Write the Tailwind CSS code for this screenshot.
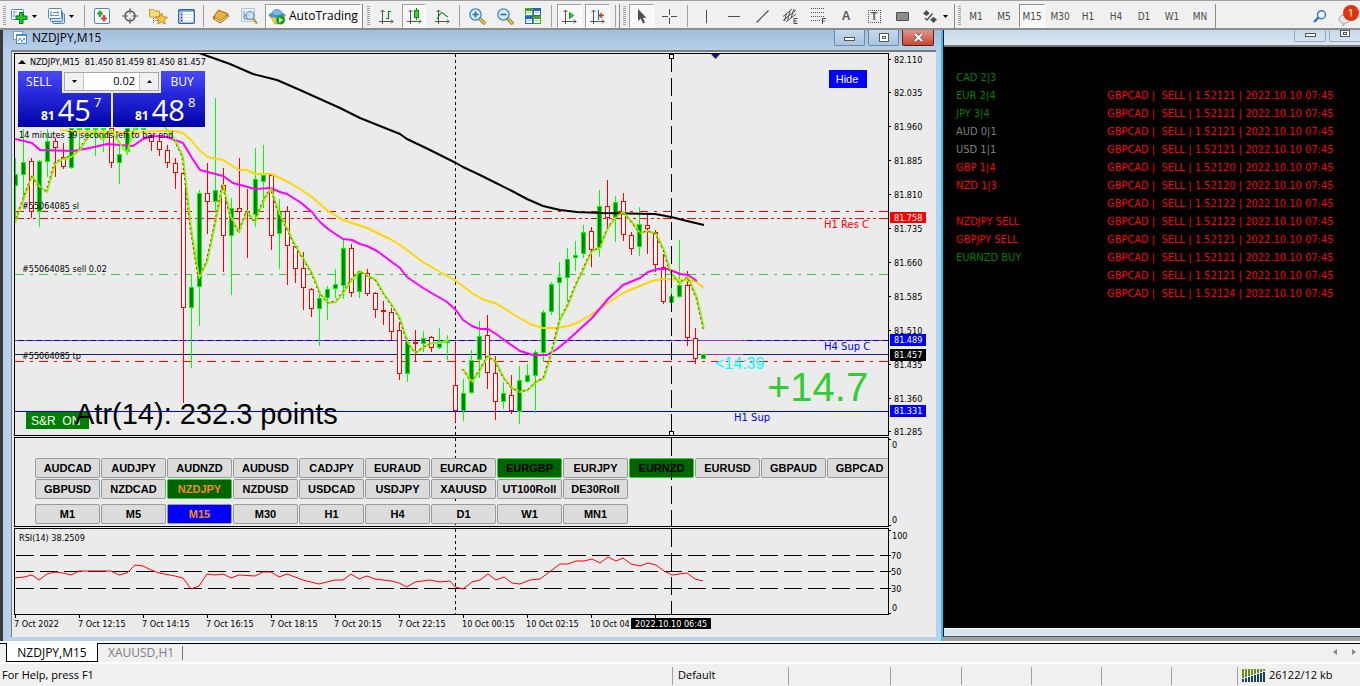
<!DOCTYPE html>
<html lang="en">
<head>
<meta charset="utf-8">
<title>NZDJPY,M15</title>
<script src="https://cdn.jsdelivr.net/npm/@tailwindcss/browser@4"></script>
</head>
<body class="flex h-screen flex-col overflow-hidden bg-[#f0f0f0] font-['Open_Sans',sans-serif] text-black">

<!-- Toolbar -->
<header class="flex h-[30px] shrink-0 items-center overflow-hidden border-t border-b-2 border-t-[#a0a0a0] border-b-[#8c8c8c] bg-[#f0f0f0] pt-[3px] text-[#4a4a4a]">
  <span class="ml-[3px] mr-[4px] h-5 w-[3px] shrink-0 bg-[repeating-linear-gradient(#a0a0a0_0_1px,#f0f0f0_1px_2px)]"></span>
  <button aria-label="New chart" class="flex h-6 w-[37px] shrink-0 items-center gap-1 pl-[1px]">
    <svg width="17" height="16" viewBox="0 0 17 16"><rect x=".5" y="1.500" width="12" height="10" rx="1" fill="#fff" stroke="#4a86c5"/><path d="M2 4h4M3 3v6M2 8h7" stroke="#7ba7d6" fill="none"/><path d="M8.500 4.500h3.500v3.500h4v3.500h-4V15.500H8.500v-4H5V8h3.500z" fill="#22c428" stroke="#0a7a12"/></svg>
    <svg width="5" height="3"><path d="M0 0h5L2.500 3z"/></svg>
  </button>
  <button aria-label="Profiles" class="flex h-6 w-[37px] shrink-0 items-center gap-1 pl-[1px]">
    <svg width="17" height="16" viewBox="0 0 17 16"><rect x="4.500" y="5.500" width="12" height="10" rx="1" fill="#cfe0f3" stroke="#4a86c5"/><rect x="2.500" y="3.500" width="12" height="10" rx="1" fill="#cfe0f3" stroke="#4a86c5"/><rect x=".5" y=".5" width="13" height="10" rx="1" fill="#fff" stroke="#4a86c5"/><path d="M3 2.500v6M2 7.500h9M5 4.500h6l-1.500-1M11 4.500l-1.500 1" stroke="#5d92cb" fill="none"/></svg>
    <svg width="5" height="3"><path d="M0 0h5L2.500 3z"/></svg>
  </button>
  <span class="mr-[3px] h-[22px] w-px shrink-0 bg-[#a0a0a0]"></span>
  <button aria-label="Market watch" class="flex h-6 w-7 shrink-0 items-center justify-center"><svg width="16" height="16" viewBox="0 0 16 16"><rect x=".5" y=".5" width="15" height="15" rx="1.500" fill="#fff" stroke="#4a86c5"/><path d="M2.500 4h11M2.500 7h11M2.500 10h11M2.500 13h11" stroke="#d8e6f5"/><path d="M5 8.500V6H3l3-3.500L9 6H7v2.500z" fill="#28b428" stroke="#128012" stroke-width=".6"/><path d="M9 7.500V10H7l3 3.500L13 10h-2V7.500z" fill="#f04a28" stroke="#b8260c" stroke-width=".6"/></svg></button>
  <button aria-label="Data window" class="flex h-6 w-7 shrink-0 items-center justify-center"><svg width="16" height="16" viewBox="0 0 16 16" fill="none" stroke="#555"><circle cx="8" cy="8" r="5" stroke-width="1.500"/><path d="M8 0v6M8 10v6M0 8h6M10 8h6"/></svg></button>
  <button aria-label="Navigator" class="flex h-6 w-7 shrink-0 items-center justify-center"><svg width="19" height="17" viewBox="0 0 19 17"><path d="M.5 1.500h4l1 1.500h5v6H.5z" fill="#f9dd7c" stroke="#c09b2a"/><path d="M4.500 10v6M6 12.500h4" stroke="#555" stroke-dasharray="1 1"/><path d="M12.500 5l1.800 3.800 4.100.5-3 2.800.8 4-3.700-2-3.700 2 .8-4-3-2.800 4.100-.5z" fill="#fbc33d" stroke="#b9771a" stroke-width=".8"/></svg></button>
  <button aria-label="Terminal" class="flex h-6 w-7 shrink-0 items-center justify-center"><svg width="17" height="15" viewBox="0 0 17 15"><rect x=".7" y=".7" width="15.600" height="13.600" rx="1" fill="#fff" stroke="#2f6db3" stroke-width="1.400"/><path d="M1 2h15" stroke="#2f6db3"/><rect x="2" y="3" width="3" height="11" fill="#a9c9ec"/><path d="M6 5.500h8M6 8.500h8M6 11.500h8" stroke="#d3e0ee"/><path d="M3 5.500h1M3 8.500h1M3 11.500h1" stroke="#111"/></svg></button>
  <span class="mx-[3px] h-[22px] w-px shrink-0 bg-[#a0a0a0]"></span>
  <button aria-label="Strategy tester" class="flex h-6 w-7 shrink-0 items-center justify-center"><svg width="18" height="15" viewBox="0 0 18 15"><path d="M1.500 8L6.500 1l9.500 4-7 7z" fill="#e9b13c" stroke="#9a6408"/><path d="M1.500 8l7 4 7.500-6.500.5 2-8 6.500-7-4z" fill="#c98e22" stroke="#8a5606" stroke-width=".7"/><path d="M3 9.500l5.500 3 7-5.500" fill="none" stroke="#fff0c0"/></svg></button>
  <button aria-label="MetaEditor" class="flex h-6 w-7 shrink-0 items-center justify-center"><svg width="17" height="17" viewBox="0 0 17 17"><rect x=".5" y=".5" width="13" height="13" fill="#e9f1fa" stroke="#b6c6d8"/><path d="M3 3v8h8M3 9l2-3 2 2 3-4" fill="none" stroke="#789"/><circle cx="9" cy="7.500" r="4" fill="#c6e2f7" fill-opacity=".8" stroke="#5b91c2" stroke-width="1.200"/><path d="M12 10.500l4 5" stroke="#c9952c" stroke-width="2.200"/></svg></button>
  <button class="ml-[2px] flex h-[25px] w-[96px] shrink-0 items-center gap-[3px] border border-[#fff] border-l-[#9a9a9a] border-t-[#9a9a9a] bg-[#f9f9f9] pl-[2px] text-xs text-black">
    <svg width="18" height="17" viewBox="0 0 18 17" class="shrink-0"><path d="M2 8l5 8 8-1 2-8z" fill="#f6cf46" stroke="#b98a1c" stroke-width=".7"/><ellipse cx="9" cy="7" rx="8.500" ry="3" fill="#4c97cf"/><path d="M4 6c0-6 10-6 10 0-2 2-8 2-10 0z" fill="#7dbbe6" stroke="#2d79b5" stroke-width=".6"/><circle cx="12.500" cy="12" r="4.500" fill="#15a51f"/><path d="M11 9.500v5l4-2.500z" fill="#fff"/></svg>
    <span>AutoTrading</span>
  </button>
  <span class="ml-[1px] mr-[4px] h-6 w-px shrink-0 bg-[#8c8c8c]"></span>
  <span class="mr-[2px] h-5 w-[3px] shrink-0 bg-[repeating-linear-gradient(#a0a0a0_0_1px,#f0f0f0_1px_2px)]"></span>
  <button aria-label="Bar chart" class="flex h-6 w-7 shrink-0 items-center justify-center"><svg width="15" height="15" viewBox="0 0 15 15" fill="none"><path d="M3.500 1v14M0 12.500h14M1.500 3l2-2 2 2M12 10.500l2 2-2 2" stroke="#555"/><path d="M9.500 2v8M7 9.500h2.500M9.500 2.500H12" stroke="#0a8a12" stroke-width="1.200"/></svg></button>
  <button aria-label="Candlesticks" class="mx-[2px] flex h-6 w-6 shrink-0 items-center justify-center border border-[#fff] border-l-[#a0a0a0] border-t-[#a0a0a0] bg-[#f8f8f8]"><svg width="15" height="16" viewBox="0 0 15 16" fill="none"><path d="M3.500 2v14M0 13.500h14M1.500 4l2-2 2 2M12 11.500l2 2-2 2" stroke="#555"/><path d="M9.500 0v12" stroke="#0a8a12"/><rect x="7.500" y="2.500" width="4" height="7" fill="#35d43c" stroke="#0a8a12"/></svg></button>
  <button aria-label="Line chart" class="flex h-6 w-7 shrink-0 items-center justify-center"><svg width="15" height="15" viewBox="0 0 15 15" fill="none"><path d="M3.500 1v14M0 12.500h14M1.500 3l2-2 2 2M12 10.500l2 2-2 2" stroke="#555"/><path d="M2 10l3-5c2-2 4-1 5 1l3 2" stroke="#1b9a23" stroke-width="1.200"/></svg></button>
  <span class="mx-[3px] h-[22px] w-px shrink-0 bg-[#a0a0a0]"></span>
  <button aria-label="Zoom in" class="flex h-6 w-7 shrink-0 items-center justify-center"><svg width="17" height="17" viewBox="0 0 17 17"><path d="M10 10l6 6" stroke="#a87a17" stroke-width="3.400"/><path d="M10.500 10.500l5 5" stroke="#f7d368" stroke-width="1.400"/><circle cx="6.500" cy="6.500" r="5.600" fill="#d5ecfc" stroke="#3d82bd" stroke-width="1.300"/><path d="M3.500 6.500h6M6.500 3.500v6" stroke="#1f6db4" stroke-width="1.600"/></svg></button>
  <button aria-label="Zoom out" class="flex h-6 w-7 shrink-0 items-center justify-center"><svg width="17" height="17" viewBox="0 0 17 17"><path d="M10 10l6 6" stroke="#a87a17" stroke-width="3.400"/><path d="M10.500 10.500l5 5" stroke="#f7d368" stroke-width="1.400"/><circle cx="6.500" cy="6.500" r="5.600" fill="#d5ecfc" stroke="#3d82bd" stroke-width="1.300"/><path d="M3.500 6.500h6" stroke="#1f6db4" stroke-width="1.600"/></svg></button>
  <button aria-label="Tile windows" class="flex h-6 w-7 shrink-0 items-center justify-center"><svg width="16" height="16" viewBox="0 0 16 16"><path d="M0 0h8v8H0zM8 8h8v8H8z" fill="#4aa31c"/><path d="M8 0h8v8H8zM0 8h8v8H0z" fill="#2a62c8"/><path d="M1 3h6v4H1zM9 3h6v4H9zM1 11h6v4H1zM9 11h6v4H9z" fill="#f2f7fc"/><path d="M2 4.500h4M10 4.500h4M2 12.500h4M10 12.500h4" stroke="#a9c1da"/></svg></button>
  <span class="mx-[4px] h-[22px] w-px shrink-0 bg-[#a0a0a0]"></span>
  <button aria-label="Auto scroll" class="ml-[1px] mr-[3px] flex h-6 w-[25px] shrink-0 items-center justify-center border border-[#fff] border-l-[#a0a0a0] border-t-[#a0a0a0] bg-[#f8f8f8]"><svg width="15" height="15" viewBox="0 0 15 15" fill="none"><path d="M3.500 1v14M0 12.500h14M1.500 3l2-2 2 2M12 10.500l2 2-2 2" stroke="#555"/><path d="M7.500 3.500v6l4-3z" fill="#35d43c" stroke="#0a8a12"/></svg></button>
  <button aria-label="Chart shift" class="mr-[5px] flex h-6 w-[25px] shrink-0 items-center justify-center border border-[#fff] border-l-[#a0a0a0] border-t-[#a0a0a0] bg-[#f8f8f8]"><svg width="15" height="15" viewBox="0 0 15 15" fill="none"><path d="M3.500 1v14M0 12.500h14M1.500 3l2-2 2 2M12 10.500l2 2-2 2" stroke="#555"/><path d="M8.500 1v10" stroke="#2268b0" stroke-width="1.200"/><path d="M14 6.500H10M12 4l-2.500 2.500L12 9" stroke="#b8400c" stroke-width="1.300"/></svg></button>
  <span class="h-[22px] w-px shrink-0 bg-[#a0a0a0]"></span>
  <span class="ml-[3px] mr-[3px] h-6 w-px shrink-0 bg-[#8c8c8c]"></span>
  <span class="mr-[3px] h-5 w-[3px] shrink-0 bg-[repeating-linear-gradient(#a0a0a0_0_1px,#f0f0f0_1px_2px)]"></span>
  <button aria-label="Cursor" class="mr-[1px] flex h-6 w-[25px] shrink-0 items-center justify-center border border-[#fff] border-l-[#a0a0a0] border-t-[#a0a0a0] bg-[#f8f8f8]"><svg width="10" height="15" viewBox="0 0 10 15"><path d="M1 0v12l2.800-2.500L6 14.500l2-1L6 8.800h3.500z" fill="#4d4d4d"/></svg></button>
  <button aria-label="Crosshair" class="flex h-6 w-7 shrink-0 items-center justify-center"><svg width="15" height="15" stroke="#4d4d4d"><path d="M7.500 0v6M7.500 9v6M0 7.500h6M9 7.500h6"/></svg></button>
  <span class="mx-[4px] h-[22px] w-px shrink-0 bg-[#a0a0a0]"></span>
  <button aria-label="Vertical line" class="flex h-6 w-7 shrink-0 items-center justify-center"><svg width="15" height="14" stroke="#4d4d4d"><path d="M7.500 1v13"/></svg></button>
  <button aria-label="Horizontal line" class="flex h-6 w-7 shrink-0 items-center justify-center"><svg width="13" height="13" stroke="#4d4d4d"><path d="M0 6.500h12"/></svg></button>
  <button aria-label="Trendline" class="flex h-6 w-7 shrink-0 items-center justify-center"><svg width="13" height="13" stroke="#4d4d4d"><path d="M.5 12.500l12-12" stroke-width="1.200"/></svg></button>
  <button aria-label="Equidistant channel" class="flex h-6 w-7 shrink-0 items-center justify-center"><svg width="17" height="17" viewBox="0 0 17 17" stroke="#4d4d4d" fill="none"><path d="M1 8.500L10 1M1 12.500L14 2M4 14l10-8M4.500 5l-2 8M8 3L5.500 12M12 1L9 10"/><path d="M15.500 10.500h-3.500v5h3.500M12 13h3"/></svg></button>
  <button aria-label="Fibonacci" class="flex h-6 w-7 shrink-0 items-center justify-center"><svg width="15" height="16" viewBox="0 0 15 16" stroke="#4d4d4d" fill="none"><path d="M0 .5h14M0 4.500h14M0 8.500h14M0 12.500h9" stroke-dasharray="1 1"/><path d="M11.500 16v-5.500H15M11.500 13H14"/></svg></button>
  <button aria-label="Text" class="flex h-6 w-7 shrink-0 items-center justify-center font-['Liberation_Sans',sans-serif] text-xs font-bold text-[#5a5a5a]">A</button>
  <button aria-label="Text label" class="flex h-6 w-7 shrink-0 items-center justify-center"><span class="flex h-[13px] w-[13px] items-center justify-center border border-dotted border-[#4d4d4d] font-['Liberation_Sans',sans-serif] text-[11px] font-bold text-[#5a5a5a]">T</span></button>
  <button aria-label="Rectangle" class="flex h-6 w-7 shrink-0 items-center justify-center"><span class="h-[9px] w-[13px] rounded-[1px] border border-[#4d4d4d] bg-[#8d8d8d]"></span></button>
  <button aria-label="Arrows" class="flex h-6 w-[38px] shrink-0 items-center gap-[6px] pl-[7px]"><svg width="14" height="13" viewBox="0 0 14 13" fill="#4d4d4d"><path d="M3.500 0L6.500 3.500 3.500 6 0 3.500zM10.500 7L14 9.500 10.500 13 7 9.500z"/><path d="M2 8l2 2 5.500-6.500" fill="none" stroke="#4d4d4d" stroke-width="1.300"/></svg><svg width="5" height="3" class="shrink-0"><path d="M0 0h5L2.500 3z"/></svg></button>
  <span class="mr-[3px] h-6 w-px shrink-0 bg-[#8c8c8c]"></span>
  <span class="mr-[1px] h-5 w-[3px] shrink-0 bg-[repeating-linear-gradient(#a0a0a0_0_1px,#f0f0f0_1px_2px)]"></span>
  <nav aria-label="Timeframes" class="flex shrink-0 font-['DejaVu_Sans_Condensed','DejaVu_Sans',sans-serif] text-[10px]">
    <button class="h-6 w-7">M1</button><button class="h-6 w-7">M5</button><button class="mx-[1px] h-6 w-[26px] border border-[#fff] border-l-[#8c8c8c] border-t-[#8c8c8c] bg-[#f8f8f8]">M15</button><button class="h-6 w-7">M30</button><button class="h-6 w-7">H1</button><button class="h-6 w-7">H4</button><button class="h-6 w-7">D1</button><button class="h-6 w-7">W1</button><button class="h-6 w-7">MN</button>
  </nav>
  <span class="ml-px h-6 w-px shrink-0 bg-[#8c8c8c]"></span>
  <button aria-label="Search" class="ml-auto mr-[11px] shrink-0"><svg width="14" height="13" viewBox="0 0 14 13" fill="none"><path d="M1 12l5-5" stroke="#2f74c8" stroke-width="2.400"/><circle cx="8.500" cy="4.800" r="4" fill="#f5faff" stroke="#2f74c8" stroke-width="1.400"/></svg></button>
  <button aria-label="Notifications" class="relative mr-[1px] h-6 w-[21px] shrink-0">
    <svg width="14" height="12" viewBox="0 0 14 12" class="absolute bottom-[2px] left-0"><path d="M6 1c8 0 8 8 1 8l-2 3V9C-1 8 0 1 6 1z" fill="#e4e4e4" stroke="#a9a9a9"/></svg>
    <span class="absolute right-0 top-px h-4 w-4 rounded-full bg-[#de3412] text-center text-[11px] leading-4 text-white">1</span>
  </button>
</header>

<!-- Workspace -->
<main class="flex min-h-0 flex-1 bg-[#a0a0a0]">
  <section class="flex w-[943px] shrink-0 flex-col border-l-3 border-[#3a3a3a] border-r-2 border-r-[#22c8f2] bg-[#b9d1ea] pb-[4px]">
    <div class="flex h-[20px] shrink-0 items-start bg-linear-to-b from-[#a3bedb] to-[#b6d0ea] pl-[10px]">
      <svg width="14" height="14" viewBox="0 0 14 14"><rect x=".5" y="1.500" width="9" height="8" fill="#fff" stroke="#6aa2dc"/><rect x="3.500" y="4.500" width="10" height="9" fill="#fff" stroke="#4a8ad0"/><path d="M3 5h11" stroke="#4a8ad0" stroke-width="2"/><path d="M5 11l2-3 2 4 2-4 1 2" fill="none" stroke="#4a8ad0"/></svg>
      <h1 class="ml-[5px] text-xs leading-4">NZDJPY,M15</h1>
      <div class="ml-auto mr-[7px] flex gap-[3px]">
        <button aria-label="Minimize" class="flex h-[16px] w-[31px] items-center justify-center rounded-b-xs border border-t-0 border-[#6c87a8] bg-linear-to-b from-[#c4d8ec] to-[#a9c4e0]"><span class="mt-[2px] h-[4px] w-[11px] border border-[#555] bg-white"></span></button>
        <button aria-label="Restore" class="flex h-[16px] w-[31px] items-center justify-center rounded-b-xs border border-t-0 border-[#6c87a8] bg-linear-to-b from-[#c4d8ec] to-[#a9c4e0]"><span class="flex h-[9px] w-[10px] items-center justify-center border border-[#555] bg-white"><span class="h-[3px] w-[4px] border border-[#555]"></span></span></button>
        <button aria-label="Close" class="flex h-[16px] w-[32px] items-center justify-center rounded-b-xs border border-t-0 border-[#5b2020] bg-linear-to-b from-[#e0948a] to-[#c8452e]"><svg width="11" height="9" viewBox="0 0 11 9"><path d="M2 1l7 7M9 1L2 8" stroke="#6b4a50" stroke-width="3.600"/><path d="M2 1l7 7M9 1L2 8" stroke="#fff" stroke-width="2.200"/></svg></button>
      </div>
    </div>

    <div class="ml-[8px] mr-[5px] flex flex-1 flex-col border-l border-t-2 border-[#7d7d7d] bg-[#ebebeb] pl-[2px] pt-px">

      <!-- Price chart -->
      <div class="flex h-[383px]">
        <div class="relative w-[875px] overflow-hidden border border-black">
          <svg width="873" height="381" viewBox="15 54 873 381" class="absolute left-0 top-0" role="img" aria-label="NZDJPY price chart">
            <g fill="none" shape-rendering="crispEdges">
              <path d="M15 211.500H888M15 361.500H888" stroke="#f00" stroke-dasharray="9 6 3 6"/>
              <path d="M15 218.500H888" stroke="#f00" stroke-dasharray="9 3 3 3 3 3"/>
              <path d="M15 274.500H888" stroke="#32cd32" stroke-dasharray="9 6 3 6"/>
              <path d="M15 340.500H888M15 411.500H888" stroke="#00f"/>
              <path d="M15 340.500H888" stroke="#9932cc" stroke-dasharray="3 6"/>
              <path d="M15 354.500H888" stroke="#191970"/>
              <path d="M700 340.500H743M700 354.500H743" stroke="#9932cc"/>
              <path d="M455.500 54V435" stroke="#000" stroke-dasharray="3 3"/>
            </g>
            <g id="candles" shape-rendering="crispEdges"></g>
            <g fill="none" stroke-linejoin="round">
              <path stroke="#000" stroke-width="2" d="M199 53 216 59 230 64 253 74 277 80 300 90 320 99 340 108 360 118 380 126 400 134 407 139 428 149 456 163 463 167 480 175 496 183 512 191 527 199 543 206 560 210 577 212 600 213 655 214 671 217 687 221 704 225"/>
              <path stroke="#ffd700" stroke-width="2" d="M60 130 83 132 110 132 133 133 157 131 175 131 183 133 192 141 200 151 208 157 223 160 239 170 247 170 255 174 271 174 280 178 290 183 300 189 312 197 320 204 328 211 343 220 367 228 392 240 400 245 423 262 440 272 456 281 472 293 482 299 497 304 513 314 530 324 543 328 557 328 568 326 577 323 592 314 608 303 623 293 640 286 652 281 663 279 680 280 695 281 704 288"/>
              <path stroke="#f0f" stroke-width="2" d="M15 139 32 143 40 150 73 151 90 148 107 144 133 146 143 139 153 136 167 137 183 143 192 158 200 170 223 176 233 183 255 189 271 188 280 192 287 194 300 202 312 212 320 222 328 229 343 239 352 240 360 244 367 246 377 251 400 268 407 277 423 288 447 302 456 310 463 320 472 326 480 329 488 329 496 334 507 342 520 351 533 355 547 355 557 349 568 340 592 318 608 299 623 285 640 278 648 272 658 269 668 269 680 274 688 275 697 281"/>
              <path stroke="#7cfc00" stroke-width="2" d="M15 223 32 176 40 187 47 192 55 164 63 159 71 157 80 150 88 137 95 132 103 140 110 130 119 142 127 153 133 132 138 124M163 124 167 130 175 140 183 157 191 228 199 278 207 262 215 225 223 185 231 217 239 232 247 211 255 222 263 202 271 188 279 213 287 228 295 245 303 258 312 273 320 293 328 303 336 302 344 292 352 280 360 271 368 276 376 280 384 294 392 305 400 318 408 343 416 353 424 347 432 343 440 343 448 340M463 369 472 382 480 370 488 356 496 362 504 378 512 388 520 392 528 390 536 382 544 378 552 352 560 320 568 305 576 285 584 268 592 251 600 248 608 228 616 217 623 212 632 222 640 233 648 231 656 234 664 250 671 273 680 283 688 277 697 298 704 329"/>
              <path stroke="#f00" stroke-dasharray="2 3" d="M14 223 31 176 39 187 46 191 54 163 62 158 70 156 79 149 87 136M174 140 182 157 190 228 198 278 206 262 214 225 222 185 230 217 238 232 246 211 254 222 262 202 270 188 278 213 286 228 294 245 302 258 311 273 319 293 327 303 335 301 343 291 351 279 359 271 367 276 375 280 383 294 391 305 399 318 407 343 415 353 423 347 431 343M462 369 471 382 479 370 487 356 495 362 503 378 511 388 519 392 527 390 535 382 543 378 551 352 559 320 567 305 575 285 583 268 591 251 599 248 607 228 615 217 622 212 631 222 639 233 647 231 655 234 663 250 670 273 679 283 687 277 696 298 703 329"/>
            </g>
            <path d="M671.500 54V435" stroke="#000" stroke-dasharray="18 6" shape-rendering="crispEdges"/>
            <path d="M669.500 54.500h4v4h-4zM669.500 431.500h4v4h-4z" fill="#fff" stroke="#000" shape-rendering="crispEdges"/>
            <path d="M711 54h9l-4.500 5z" fill="#191970"/>
            <path d="M18 64l4-4 4 4z"/>
            <g class="font-['DejaVu_Sans_Condensed','DejaVu_Sans',sans-serif] text-[9px]">
              <text x="30" y="65" xml:space="preserve">NZDJPY,M15  81.450 81.459 81.450 81.457</text>
              <text x="19" y="138">14 minutes 39 seconds left to bar end</text>
              <text x="22" y="209">#55064085 sl</text>
              <text x="22" y="272">#55064085 sell 0.02</text>
              <text x="22" y="359">#55064085 tp</text>
            </g>
            <g class="font-['DejaVu_Sans',sans-serif] text-[10px]">
              <text x="824" y="228" fill="#f00">H1 Res C</text>
              <text x="824" y="350" fill="#00f">H4 Sup C</text>
              <text x="734" y="421" fill="#00f">H1 Sup</text>
            </g>
            <g class="font-['Liberation_Sans',sans-serif]">
              <text x="715" y="369" fill="#0ff" class="text-base">&lt;14:39</text>
              <text x="767" y="401" fill="#32cd32" class="text-[40px]">+14.7</text>
            </g>
          </svg>

          <!-- One click trading -->
          <form class="absolute left-[3px] top-[17px] w-[187px] text-white">
            <div class="flex h-[22px] items-start justify-between">
              <button type="button" class="h-[22px] w-11 bg-linear-to-b from-[#4a4af4] to-[#2a2ae0] pr-[2px] text-xs">SELL</button>
              <div class="mt-px flex h-[19px] w-[95px] border border-[#a8a8a8] bg-white">
                <button type="button" aria-label="Decrease volume" class="flex w-[19px] items-center justify-center border-r border-[#c4c4c4] bg-[#f0f0f0]"><svg width="5" height="3"><path d="M0 0h5L2.500 3z"/></svg></button>
                <input aria-label="Volume" value="0.02" class="w-0 flex-1 pr-1 text-right text-[11px] text-black">
                <button type="button" aria-label="Increase volume" class="flex w-[19px] items-center justify-center border-l border-[#c4c4c4] bg-[#f0f0f0]"><svg width="5" height="3"><path d="M0 3h5L2.500 0z"/></svg></button>
              </div>
              <button type="button" class="h-[22px] w-11 bg-linear-to-b from-[#4a4af4] to-[#2a2ae0] pr-[2px] text-xs">BUY</button>
            </div>
            <div class="flex h-[34px] gap-[2px]">
              <div class="flex flex-1 items-end bg-linear-to-b from-[#2828dc] to-[#0000a8] pl-[23px] pb-[3px]"><span class="text-xs font-bold leading-4">81</span><span class="ml-[3px] text-[29px] leading-[28px]">45</span><span class="mb-[16px] ml-[3px] text-[13px] leading-3">7</span></div>
              <div class="flex flex-1 items-end bg-linear-to-b from-[#2828dc] to-[#0000a8] pl-[22px] pb-[3px]"><span class="text-xs font-bold leading-4">81</span><span class="ml-[3px] text-[29px] leading-[28px]">48</span><span class="mb-[16px] ml-[3px] text-[13px] leading-3">8</span></div>
            </div>
          </form>
          <button class="absolute right-[21px] top-[16px] h-[18px] w-[38px] bg-[#00f] pr-[2px] font-['Liberation_Sans',sans-serif] text-[11px] leading-[18px] text-white">Hide</button>
          <button class="absolute bottom-[6px] left-[11px] h-[17px] w-[63px] whitespace-pre bg-[#008000] pl-[5px] text-left font-['Liberation_Sans',sans-serif] text-xs text-white">S&amp;R  ON</button>
          <svg width="270" height="40" viewBox="75 395 270 40" class="pointer-events-none absolute bottom-0 left-[60px]"><text x="75" y="424" class="font-['Liberation_Sans',sans-serif] text-[29px]">Atr(14): 232.3 points</text></svg>
        </div>
        <svg width="47" height="383" viewBox="889 53 47 383" class="overflow-visible font-['DejaVu_Sans_Condensed','DejaVu_Sans',sans-serif] text-[9px]">
          <g id="ticks"></g>
          <path fill="#f00" d="M890 212h36v11h-36z"/><path fill="#00f" d="M890 334h36v12h-36zM890 405h36v12h-36z"/><path d="M890 349h36v12h-36z"/>
          <g fill="#fff"><text x="894" y="221">81.758</text><text x="894" y="343">81.489</text><text x="894" y="358">81.457</text><text x="894" y="414">81.331</text></g>
        </svg>
      </div>

      <!-- Symbol and timeframe switcher -->
      <div class="mt-px flex h-[90px]">
        <div class="relative w-[875px] overflow-hidden border border-black pl-[20px] pt-[20px] font-['Liberation_Sans',sans-serif] text-[11px] font-bold">
          <svg width="873" height="88" viewBox="15 438 873 88" class="pointer-events-none absolute left-0 top-0" shape-rendering="crispEdges"><path d="M455.500 438V526" stroke="#000" stroke-dasharray="3 3"/></svg>
          <div class="relative flex gap-px [&>button]:h-5 [&>button]:w-[65px] [&>button]:shrink-0 [&>button]:rounded-xs [&>button]:border [&>button]:border-[#9a9a9a] [&>button]:bg-[#dcdcdc]">
            <button>AUDCAD</button><button>AUDJPY</button><button>AUDNZD</button><button>AUDUSD</button><button>CADJPY</button><button>EURAUD</button><button>EURCAD</button><button class="border-[#32cd32]! bg-[#006400]!">EURGBP</button><button>EURJPY</button><button class="border-[#32cd32]! bg-[#006400]!">EURNZD</button><button>EURUSD</button><button>GBPAUD</button><button>GBPCAD</button>
          </div>
          <div class="relative mt-px flex gap-px [&>button]:h-5 [&>button]:w-[65px] [&>button]:shrink-0 [&>button]:rounded-xs [&>button]:border [&>button]:border-[#9a9a9a] [&>button]:bg-[#dcdcdc]">
            <button>GBPUSD</button><button>NZDCAD</button><button class="border-[#32cd32]! bg-[#006400]! text-[#ff8c00]">NZDJPY</button><button>NZDUSD</button><button>USDCAD</button><button>USDJPY</button><button>XAUUSD</button><button>UT100Roll</button><button>DE30Roll</button>
          </div>
          <div class="relative mt-[5px] flex gap-px [&>button]:h-5 [&>button]:w-[65px] [&>button]:shrink-0 [&>button]:rounded-xs [&>button]:border [&>button]:border-[#9a9a9a] [&>button]:bg-[#dcdcdc]">
            <button>M1</button><button>M5</button><button class="bg-[#00f]! text-[#ff8c00]">M15</button><button>M30</button><button>H1</button><button>H4</button><button>D1</button><button>W1</button><button>MN1</button>
          </div>
          <svg width="873" height="88" viewBox="15 438 873 88" class="pointer-events-none absolute left-0 top-0" shape-rendering="crispEdges"><path d="M671.500 438V526" stroke="#000" stroke-dasharray="18 6"/></svg>
        </div>
        <svg width="47" height="90" viewBox="889 437 47 90" class="font-['DejaVu_Sans_Condensed','DejaVu_Sans',sans-serif] text-[9px]"><text x="892" y="448">0</text><text x="892" y="523">0</text><path d="M889 439.500h2M889 525.500h2" stroke="#000"/></svg>
      </div>

      <!-- RSI -->
      <div class="mt-px flex h-[87px]">
        <div class="w-[875px] border border-black">
          <svg width="873" height="85" viewBox="15 529 873 85" fill="none">
            <g stroke="#000" shape-rendering="crispEdges"><path d="M16 555.500H888M16 571.500H888M16 588.500H888" stroke-dasharray="18 6"/><path d="M671.500 529V614" stroke-dasharray="18 6"/><path d="M455.500 529V614" stroke-dasharray="3 3"/></g>
            <path stroke="#f00" d="M15 578 24 577 32 575 39 580 47 574 55 572 63 573 71 575 79 571 111 571 119 575 127 573 135 565 143 566 151 570 159 573 175 576 183 578 191 589 199 586 207 574 215 575 223 574 231 578 239 575 255 576 263 572 271 572 279 577 287 574 295 577 303 580 319 584 335 580 343 580 351 574 359 579 367 576 375 579 391 581 399 583 407 587 415 582 430 580 440 582 450 581 455 587 463 589 472 582 480 580 488 574 496 580 504 577 512 583 520 584 530 580 540 579 552 570 560 564 568 564 576 561 584 561 592 559 600 563 608 557 616 561 623 558 631 564 640 566 648 563 656 565 664 571 672 575 679 574 687 573 695 579 703 581"/>
            <text x="19" y="541" fill="#000" class="font-['DejaVu_Sans_Condensed','DejaVu_Sans',sans-serif] text-[9px]">RSI(14) 38.2509</text>
          </svg>
        </div>
        <svg width="47" height="87" viewBox="889 528 47 87" class="font-['DejaVu_Sans_Condensed','DejaVu_Sans',sans-serif] text-[9px]"><path d="M889 530.500h2M889 555.500h2M889 571.500h2M889 588.500h2M889 613.500h2" stroke="#000"/><text x="892" y="539">100</text><text x="891" y="559">70</text><text x="891" y="575">50</text><text x="891" y="592">30</text><text x="892" y="611">0</text></svg>
      </div>
      <svg width="922" height="20" viewBox="14 615 922 20" class="font-['DejaVu_Sans_Condensed','DejaVu_Sans',sans-serif] text-[9px]"><g id="times"></g><path d="M631 618h80v11h-80z"/><text x="635" y="627" fill="#fff">2022.10.10 06:45</text></svg>
    </div>
  </section>

  <!-- Currency strength window -->
  <section class="mb-[4px] flex min-w-0 flex-1 flex-col border-b border-l border-black border-b-[#555] bg-[#d6e4f1] pb-[7px]">
    <div class="flex h-[17px] shrink-0 justify-end gap-[3px] border-b-2 border-[#777] bg-linear-to-b from-[#c9d9e8] to-[#dae7f3]">
      <button aria-label="Minimize" class="flex h-[12px] w-[32px] items-start justify-center rounded-b-xs border border-t-0 border-[#95a5bb] pt-[3px]"><span class="h-[4px] w-[11px] border border-[#555] bg-white"></span></button>
      <button aria-label="Restore" class="flex h-[12px] w-[31px] items-start justify-center rounded-bl-xs border-b border-l border-[#95a5bb]"><span class="flex h-[7px] w-[10px] items-center justify-center border border-[#555] bg-white"><span class="h-[3px] w-[4px] border border-[#555]"></span></span></button>
    </div>
    <div class="flex-1 border-b border-white bg-black pl-[12px] pt-[22px] font-['DejaVu_Sans_Condensed','DejaVu_Sans',sans-serif] text-[11px] leading-[18px] text-[#f00] [&>div]:grid [&>div]:h-[18px] [&>div]:grid-cols-[151px_1fr] [&>div]:whitespace-pre">
      <div><span class="text-[#008000]">CAD 2|3</span></div>
      <div><span class="text-[#008000]">EUR 2|4</span><span>GBPCAD |  SELL | 1.52121 | 2022.10.10 07:45</span></div>
      <div><span class="text-[#008000]">JPY 3|4</span><span>GBPCAD |  SELL | 1.52121 | 2022.10.10 07:45</span></div>
      <div><span class="text-[#808080]">AUD 0|1</span><span>GBPCAD |  SELL | 1.52121 | 2022.10.10 07:45</span></div>
      <div><span class="text-[#808080]">USD 1|1</span><span>GBPCAD |  SELL | 1.52121 | 2022.10.10 07:45</span></div>
      <div><span>GBP 1|4</span><span>GBPCAD |  SELL | 1.52120 | 2022.10.10 07:45</span></div>
      <div><span>NZD 1|3</span><span>GBPCAD |  SELL | 1.52120 | 2022.10.10 07:45</span></div>
      <div><span></span><span>GBPCAD |  SELL | 1.52122 | 2022.10.10 07:45</span></div>
      <div><span>NZDJPY SELL</span><span>GBPCAD |  SELL | 1.52122 | 2022.10.10 07:45</span></div>
      <div><span>GBPJPY SELL</span><span>GBPCAD |  SELL | 1.52121 | 2022.10.10 07:45</span></div>
      <div><span class="text-[#008000]">EURNZD BUY</span><span>GBPCAD |  SELL | 1.52121 | 2022.10.10 07:45</span></div>
      <div><span></span><span>GBPCAD |  SELL | 1.52121 | 2022.10.10 07:45</span></div>
      <div><span></span><span>GBPCAD |  SELL | 1.52124 | 2022.10.10 07:45</span></div>
    </div>
  </section>
</main>

<!-- Chart tabs -->
<nav class="flex h-[23px] shrink-0 items-start border-b-2 border-t-2 border-b-white border-t-white pl-[6px] text-xs shadow-[inset_0_1px_0_#000]" aria-label="Charts">
  <a href="#" class="h-[19px] w-[92px] border border-t-0 border-black bg-white text-center leading-[19px]">NZDJPY,M15</a>
  <a href="#" class="ml-[10px] leading-[19px] text-[#7d7d7d]">XAUUSD,H1</a>
  <span class="ml-[8px] mt-[3px] h-[14px] w-px bg-[#777]"></span>
  <span class="ml-auto mr-[4px] mt-[6px] flex gap-[15px]"><button aria-label="Previous"><svg width="4" height="6"><path d="M4 0v6L0 3z" fill="#888"/></svg></button><button aria-label="Next"><svg width="4" height="6"><path d="M0 0v6l4-3z" fill="#888"/></svg></button></span>
</nav>

<!-- Status bar -->
<footer class="flex h-[22px] shrink-0 items-center pt-px text-[11px] [&>i]:h-[18px] [&>i]:w-px [&>i]:shrink-0 [&>i]:bg-[#a0a0a0]">
  <span class="flex-1 pl-[2px]">For Help, press F1</span>
  <i></i><span class="w-[115px] pl-[5px]">Default</span>
  <i></i><span class="w-[101px]"></span><i></i><span class="w-[70px]"></span><i></i><span class="w-[69px]"></span><i></i><span class="w-[69px]"></span><i></i><span class="w-[69px]"></span><i></i><span class="w-[65px]"></span><i></i>
  <span class="flex w-[122px] items-center gap-[3px] pl-[4px]"><svg width="24" height="13" viewBox="0 0 24 13" stroke-width="2"><path stroke="#6a8f1c" d="M1 0v9M4 0v8M7 0v7M10 0v6M13 0v5M16 0v4M19 0v3M22 0v2"/><path stroke="#17405f" d="M1 10v3M4 9v4M7 8v5M10 7v6M13 6v7M16 5v8M19 4v9M22 3v10"/></svg>26122/12 kb</span>
</footer>

<script>
  // One entry per bar: direction, high, body top, body bottom, low (thirds of a pixel below y=125).
  const bars = `G 100 148 182 295|G 12 112 150 230|R 98 108 260 278|G 105 108 260 305|G 12 48 110 155|R 40 48 70 155|R 55 95 125 132|G 9 9 130 132|G 9 10 14 70|G 9 10 14 45|G 9 10 14 92|G 9 10 14 80|R 9 9 115 130|G 50 88 115 178|G 9 9 82 90|G 9 9 12 14|G 9 9 12 14|R 30 35 50 78|R 30 48 76 92|R 60 76 115 130|R 100 115 145 192|R 140 145 548 835|G 448 487 548 728|G 195 205 485 602|R 115 205 232 327|G -81 196 232 265|R 128 180 332 440|G 220 250 332 510|R 98 250 260 325|R 192 258 261 398|G 70 162 270 305|G 60 150 172 248|R 145 150 332 375|G 222 262 328 432|R 242 258 364 480|R 360 364 433 473|R 380 430 490 555|R 490 493 553 575|G 505 520 553 663|G 483 492 518 585|G 432 478 493 520|G 345 370 482 522|R 357 370 503 515|G 435 440 500 518|R 432 445 506 512|R 500 505 556 578|R 528 556 562 600|R 550 560 620 645|R 590 616 748 765|G 640 650 748 770|R 615 652 658 708|G 618 640 658 680|R 632 637 668 680|G 610 648 668 672|G 630 648 650 704|R 655 781 858 892|G 763 805 858 887|G 675 706 805 808|G 588 634 706 758|R 570 631 745 792|R 692 745 832 885|G 772 805 830 853|R 750 811 859 867|G 723 766 862 897|G 718 751 770 775|G 675 682 752 865|G 555 562 685 712|G 472 478 560 570|G 412 457 475 580|G 370 403 458 530|G 348 391 400 438|G 300 322 388 398|R 306 318 374 425|G 195 243 370 395|R 165 243 280 305|G 213 230 280 350|R 205 228 331 348|R 320 331 371 390|G 245 297 367 393|R 268 301 313 387|R 315 321 421 440|R 387 425 530 537|G 490 513 533 540|G 345 480 515 518|R 437 481 640 663|R 608 640 703 717|G 688 688 703 703`.split('|');
  const y = v => Math.round(125 + v / 3);
  document.getElementById('candles').innerHTML = bars.map((b, i) => {
    const [d, ...v] = b.split(' ');
    const [h, t, o, l] = v.map(Number).map(y);
    const x = 15 + i * 8, c = d === 'G' ? '#00ff00' : '#ff0000';
    return `<path d="M${x + .5} ${h}V${l}" stroke="${c}"/><rect x="${x - 1.5}" y="${t + .5}" width="4" height="${Math.max(o - t - 1, 1)}" fill="${d === 'G' ? '#008000' : '#ffffff'}" stroke="${c}"/>`;
  }).join('');
  document.getElementById('ticks').innerHTML = ['82.110', '82.035', '81.960', '81.885', '81.810', '81.735', '81.660', '81.585', '81.510', '81.435', '81.360', '81.285'].map((t, i) => {
    const p = Math.round(59.5 + i * 33.9);
    return `<path d="M889 ${p - .5}h2" stroke="#000"/><text x="894" y="${p + 3}">${t}</text>`;
  }).join('');
  document.getElementById('times').innerHTML = ['7 Oct 2022', '7 Oct 12:15', '7 Oct 14:15', '7 Oct 16:15', '7 Oct 18:15', '7 Oct 20:15', '7 Oct 22:15', '10 Oct 00:15', '10 Oct 02:15', '10 Oct 04'].map((t, i) =>
    `<path d="M${15.5 + i * 64} 615v3" stroke="#000"/><text x="${14 + i * 64}" y="627">${t}</text>`).join('') + '<path d="M655.5 615v3" stroke="#000"/>';
</script>
</body>
</html>
